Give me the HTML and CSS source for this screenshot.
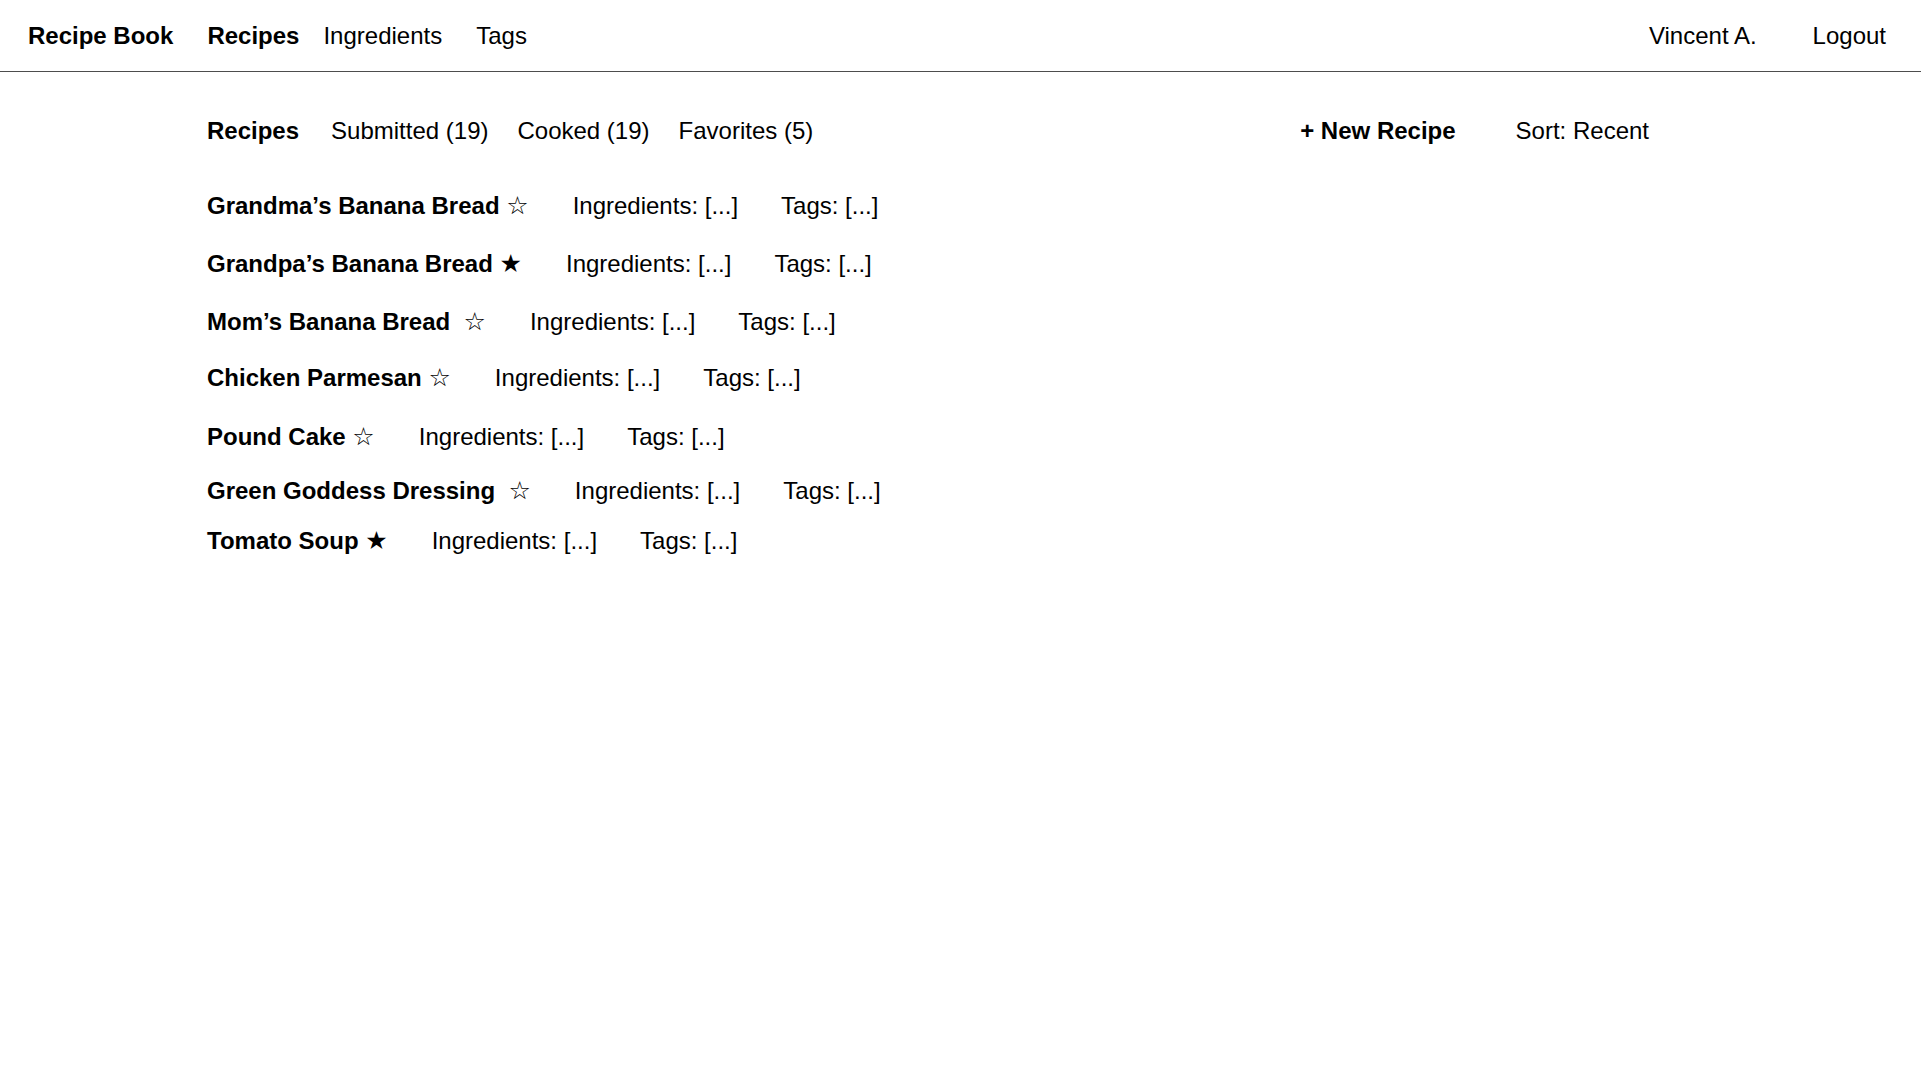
FILE: index.html
```html
<!DOCTYPE html>
<html lang="en">
<head>
    <meta charset="UTF-8">
    <meta name="viewport" content="width=device-width, initial-scale=1.0">
    <title>Recipe Book</title>
    <link rel="stylesheet" href="styles.css">
</head>
<body>

<header id="topbar">
    <div class="brand">Recipe Book</div>
    <nav class="main-nav">
        <a class="active" href="#">Recipes</a>
        <a href="#">Ingredients</a>
        <a class="tags-link" href="#">Tags</a>
    </nav>
    <div class="user-nav">
        <a href="#">Vincent A.</a>
        <a href="#">Logout</a>
    </div>
</header>

<main id="content">
    <div class="subnav">
        <div class="filters">
            <a class="active" href="#">Recipes</a>
            <a href="#">Submitted (19)</a>
            <a href="#">Cooked (19)</a>
            <a href="#">Favorites (5)</a>
        </div>
        <div class="actions">
            <a class="new-recipe" href="#">+ New Recipe</a>
            <a href="#">Sort: Recent</a>
        </div>
    </div>

    <ul class="recipe-list">
        <li class="recipe-row">
            <span class="title">Grandma’s Banana Bread <span class="star">☆</span></span>
            <span class="ingredients">Ingredients: [...]</span>
            <span class="tags">Tags: [...]</span>
        </li>
        <li class="recipe-row">
            <span class="title">Grandpa’s Banana Bread <span class="star">★</span></span>
            <span class="ingredients">Ingredients: [...]</span>
            <span class="tags">Tags: [...]</span>
        </li>
        <li class="recipe-row">
            <span class="title">Mom’s Banana Bread &nbsp;<span class="star">☆</span></span>
            <span class="ingredients">Ingredients: [...]</span>
            <span class="tags">Tags: [...]</span>
        </li>
        <li class="recipe-row">
            <span class="title">Chicken Parmesan <span class="star">☆</span></span>
            <span class="ingredients">Ingredients: [...]</span>
            <span class="tags">Tags: [...]</span>
        </li>
        <li class="recipe-row">
            <span class="title">Pound Cake <span class="star">☆</span></span>
            <span class="ingredients">Ingredients: [...]</span>
            <span class="tags">Tags: [...]</span>
        </li>
        <li class="recipe-row">
            <span class="title">Green Goddess Dressing &nbsp;<span class="star">☆</span></span>
            <span class="ingredients">Ingredients: [...]</span>
            <span class="tags">Tags: [...]</span>
        </li>
        <li class="recipe-row">
            <span class="title">Tomato Soup <span class="star">★</span></span>
            <span class="ingredients">Ingredients: [...]</span>
            <span class="tags">Tags: [...]</span>
        </li>
    </ul>
</main>

</body>
</html>
```

FILE: styles.css
```css
body {
    font-family: 'Liberation Sans', Arial, sans-serif;
    font-size: 24px;
    line-height: 28px;
    color: #000;
    background-color: #fff;
    margin: 0;
    padding: 0;
}

a {
    color: #000;
    text-decoration: none;
}

.active,
.brand,
.new-recipe,
.title {
    font-weight: bold;
}

#topbar {
    display: flex;
    align-items: center;
    height: 71px;
    padding: 0 35px 0 28px;
    border-bottom: 1px solid #4d4d4d;
}

.brand {
    margin-right: 34px;
}

.main-nav {
    display: flex;
    gap: 24px;
}

.main-nav .tags-link {
    margin-left: 10px;
}

.user-nav {
    display: flex;
    gap: 56px;
    margin-left: auto;
}

#content {
    width: 1442px;
    padding: 45px 0 0 207px;
}

.subnav {
    display: flex;
    justify-content: space-between;
}

.filters {
    display: flex;
    gap: 29px;
}

.filters .active {
    margin-right: 3px;
}

.actions {
    display: flex;
    gap: 60px;
}

.recipe-list {
    list-style: none;
    margin: 47px 0 0;
    padding: 0;
}

.recipe-row {
    display: flex;
    align-items: baseline;
    height: 28px;
    padding-bottom: 30px;
}

.recipe-row:nth-child(3) {
    padding-bottom: 28px;
}

.recipe-row:nth-child(4) {
    padding-bottom: 31px;
}

.recipe-row:nth-child(5) {
    padding-bottom: 26px;
}

.recipe-row:nth-child(6) {
    padding-bottom: 22px;
}

.star {
    font-family: 'DejaVu Sans', sans-serif;
    font-weight: normal;
    font-size: 25px;
    line-height: 0;
}

.ingredients {
    margin-left: 44px;
}

.tags {
    margin-left: 43px;
}
```
